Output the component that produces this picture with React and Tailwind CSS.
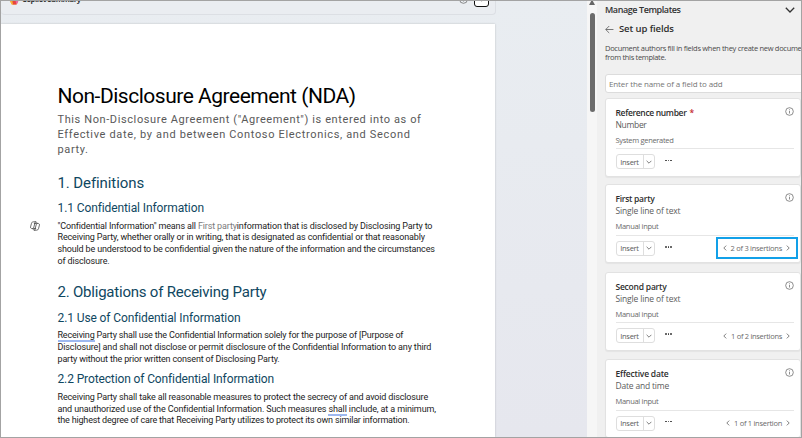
const APTOS = "font-[Roboto,'Liberation_Sans',sans-serif]";
const SEGOE = "font-['Open_Sans','Noto_Sans',sans-serif]";

function Line({ t, children }) {
  return <span className={`block whitespace-nowrap ${t}`}>{children}</span>;
}

function Title1({ className, children }) {
  return <h2 className={`text-[15px] leading-[18px] text-[#0f4761] whitespace-nowrap ${className}`}>{children}</h2>;
}

function Title2({ className, children }) {
  return <h3 className={`text-[12px] leading-[16px] text-[#0f4761] whitespace-nowrap ${className}`}>{children}</h3>;
}

function Body({ className, children }) {
  return <p className={`text-[9px] leading-[11.67px] text-[#1c1c1c] ${className}`}>{children}</p>;
}

function Grammar({ children }) {
  return <span className="border-b-2 border-[#9db8f0]">{children}</span>;
}

function CopilotOutline() {
  return (
    <svg viewBox="0 0 20 20" className="h-[10px] w-[10px] shrink-0" fill="none" stroke="#4a4a4a" strokeWidth="1.6" strokeLinejoin="round" strokeLinecap="round">
      <path d="M5.2 15H3.6C1.6 15 .7 13.4 1.1 11.8L3 4.6C3.5 2.6 4.8 1.6 6.8 1.6H11.8C13 1.6 13.6 2.6 13.9 4.8" />
      <path d="M14.8 5H16.4C18.4 5 19.3 6.6 18.9 8.2L17 15.4C16.5 17.4 15.2 18.4 13.2 18.4H8.2C7 18.4 6.4 17.4 6.1 15.2" />
      <path d="M10.6 1.6 6.9 15H11.4M9.4 18.4 13.1 5H8.6" />
    </svg>
  );
}

function Info({ className = "" }) {
  return (
    <svg viewBox="0 0 16 16" className={`h-[9px] w-[9px] shrink-0 ${className}`} fill="none" stroke="#666" strokeWidth="1.3">
      <circle cx="8" cy="8" r="6.8" />
      <path d="M8 7v4.6M8 4.2v1.6" />
    </svg>
  );
}

function Chevron({ d, className }) {
  return (
    <svg viewBox="0 0 10 10" className={`shrink-0 ${className}`} fill="none" stroke="currentColor" strokeWidth="1.3">
      <path d={d} />
    </svg>
  );
}

function Field({ name, nameT, required, type, typeT, source, sourceT, count, countT, highlight, className }) {
  return (
    <section className={`relative h-[79px] shrink-0 rounded-[3px] border border-[#e2e2e2] bg-white pl-[9.5px] pr-[6px] shadow-[0_1px_1px_rgba(0,0,0,0.05)] ${className}`}>
      <div className="flex items-start justify-between pt-[8px]">
        <div className="whitespace-nowrap text-[8.5px] leading-[12px]">
          <div className={`font-semibold text-[#2e2e2e] ${nameT}`}>
            {name}
            {required && <span className="ml-[3px] text-[#c4262e]">*</span>}
          </div>
          <div className={`text-[#5c5c5c] ${typeT}`}>{type}</div>
        </div>
        <Info />
      </div>
      <div className={`mt-[4px] text-[7.5px] leading-[10px] text-[#6a6a6a] ${sourceT}`}>{source}</div>
      <div className="mt-[3.5px] h-[1px] bg-[#e6e6e6]" />
      <div className="mt-[5px] flex h-[15px] items-center">
        <div className="flex h-[15px] items-center rounded-[3px] border border-[#dedede] text-[#5a5a5a]">
          <span className="w-[26px] text-center text-[7.5px] leading-[12px] tracking-[-0.28px]">Insert</span>
          <span className="flex h-full w-[11px] items-center justify-center border-l border-[#dedede]">
            <Chevron d="M1 3 5 7 9 3" className="h-[6px] w-[6px]" />
          </span>
        </div>
        <div className="mb-[3px] ml-[10.5px] flex gap-[1px]">
          <i className="h-[1.5px] w-[1.5px] rounded-full bg-[#3a3a3a]" />
          <i className="h-[1.5px] w-[1.5px] rounded-full bg-[#3a3a3a]" />
          <i className="h-[1.5px] w-[1.5px] rounded-full bg-[#3a3a3a]" />
        </div>
        {count && (
          <div className="ml-auto mr-[3px] flex items-center gap-[3px] text-[#5c5c5c]">
            <Chevron d="M7 1 3 5 7 9" className="h-[6px] w-[6px]" />
            <span className={`whitespace-nowrap text-[7.5px] leading-[12px] text-[#6a6a6a] ${countT}`}>{count}</span>
            <Chevron d="M3 1 7 5 3 9" className="h-[6px] w-[6px]" />
          </div>
        )}
      </div>
      {highlight && <div className="absolute right-[2px] top-[51.5px] h-[22px] w-[82px] border-2 border-[#12a0e8]" />}
    </section>
  );
}

export default function App() {
  return (
    <div className="flex h-[438px] w-[802px] overflow-hidden border border-[#a3a3a3] bg-[#f0f0f0]">
      <main className={`flex w-[586px] shrink-0 flex-col overflow-hidden bg-linear-to-b from-[#e9edf1] to-[#e6e7ee] ${APTOS}`}>
        <div className="flex h-[14px] w-[495px] shrink-0 items-start overflow-hidden rounded-b-[4px] border-b border-r border-[#dcdfe4] bg-[#eaedf1]">
          <svg viewBox="0 0 20 20" className="-mt-[7px] ml-[7px] h-[11px] w-[12px] shrink-0">
            <path d="M6 1h8l5 9-4 9H6L1 10z" fill="#f28a2e" />
            <path d="M1 10 5 12l4 7H6z" fill="#f6b73c" />
            <path d="M8 12h8l-2 7H8z" fill="#e8453c" />
            <path d="M15 5l4 5-4 9-2-5z" fill="#e765a8" />
          </svg>
          <span className={`-mt-[7px] ml-[2px] whitespace-nowrap text-[7.5px] font-bold leading-[11px] tracking-[-0.4px] text-[#333] ${SEGOE}`}>Copilot Summary</span>
          <Info className="-mt-[6px] ml-auto" />
          <div className="-mt-[8px] ml-[6px] mr-[6px] flex h-[14px] w-[15px] items-center justify-center rounded-[3px] border-[1.5px] border-[#111] bg-white">
            <Chevron d="M1 3 5 7 9 3" className="h-[6px] w-[6px] text-[#555]" />
          </div>
        </div>
        <article className="mt-[9px] w-[494px] flex-1 bg-white pl-[56.5px] pt-[60px] shadow-[0_0_2px_rgba(0,0,0,0.2)]">
          <h1 className="whitespace-nowrap text-[21px] leading-[24px] tracking-[-0.483px] text-black">Non-Disclosure Agreement (NDA)</h1>
          <p className="mt-[4px] text-[11px] leading-[15px] text-[#595959]">
            <Line t="tracking-[0.604px]">This Non-Disclosure Agreement ("Agreement") is entered into as of</Line>
            <Line t="tracking-[0.662px]">Effective date, by and between Contoso Electronics, and Second</Line>
            <Line t="tracking-[0.62px]">party.</Line>
          </p>
          <Title1 className="mt-[17px] tracking-[-0.092px]">1. Definitions</Title1>
          <Title2 className="mt-[8px] tracking-[-0.104px]">1.1 Confidential Information</Title2>
          <div className="-ml-[28px] mt-[4.8px] flex gap-[18px]">
            <CopilotOutline />
            <Body>
              <Line t="tracking-[-0.144px]">
                "Confidential Information" means all <span className="text-[#7b7b7b]">First party</span>information that is disclosed by Disclosing Party to
              </Line>
              <Line t="tracking-[-0.142px]">Receiving Party, whether orally or in writing, that is designated as confidential or that reasonably</Line>
              <Line t="tracking-[-0.154px]">should be understood to be confidential given the nature of the information and the circumstances</Line>
              <Line t="tracking-[-0.154px]">of disclosure.</Line>
            </Body>
          </div>
          <Title1 className="mt-[15.7px] tracking-[-0.214px]">2. Obligations of Receiving Party</Title1>
          <Title2 className="mt-[8.8px] tracking-[-0.107px]">2.1 Use of Confidential Information</Title2>
          <Body className="mt-[4.3px]">
            <Line t="tracking-[-0.172px]">
              <Grammar>Receiving</Grammar> Party shall use the Confidential Information solely for the purpose of [Purpose of
            </Line>
            <Line t="tracking-[-0.138px]">Disclosure] and shall not disclose or permit disclosure of the Confidential Information to any third</Line>
            <Line t="tracking-[-0.165px]">party without the prior written consent of Disclosing Party.</Line>
          </Body>
          <Title2 className="mt-[6.2px] tracking-[-0.122px]">2.2 Protection of Confidential Information</Title2>
          <Body className="mt-[4.5px]">
            <Line t="tracking-[-0.159px]">Receiving Party shall take all reasonable measures to protect the secrecy of and avoid disclosure</Line>
            <Line t="tracking-[-0.127px]">
              and unauthorized use of the Confidential Information. Such measures <Grammar>shall</Grammar> include, at a minimum,
            </Line>
            <Line t="tracking-[-0.178px]">the highest degree of care that Receiving Party utilizes to protect its own similar information.</Line>
          </Body>
        </article>
      </main>

      <div className="flex w-[10px] shrink-0 flex-col items-center bg-[#f6f6f6]">
        <svg viewBox="0 0 6 4" className="h-[4px] w-[6px]">
          <path d="M0 4 2.2 0h1.6L6 4z" fill="#666" />
        </svg>
        <div className="mt-[8px] h-[99px] w-[5px] rounded-full bg-[#6b6b6b]" />
      </div>

      <aside className={`flex min-w-0 flex-1 flex-col overflow-hidden pl-[8px] ${SEGOE}`}>
        <header className="flex h-[18px] shrink-0 items-center justify-between pr-[6px] text-[#333]">
          <h2 className="whitespace-nowrap text-[9px] font-semibold leading-[14px] tracking-[-0.424px]">Manage Templates</h2>
          <Chevron d="M0.8 2.8 5 7 9.2 2.8" className="h-[10px] w-[10px]" />
        </header>
        <div className="flex h-[20px] shrink-0 items-center gap-[5px] text-[#2e2e2e]">
          <svg viewBox="0 0 16 16" className="h-[9px] w-[9px]" fill="none" stroke="#555" strokeWidth="1.4">
            <path d="M15 8H1.5M7.5 1.8 1.3 8l6.2 6.2" />
          </svg>
          <h3 className="text-[9.5px] font-semibold leading-[14px] tracking-[-0.1px]">Set up fields</h3>
        </div>
        <p className="mt-[4.5px] shrink-0 text-[7.5px] leading-[9.7px] text-[#4a4a4a]">
          <Line t="tracking-[-0.299px]">Document authors fill in fields when they create new documents</Line>
          <Line t="tracking-[-0.316px]">from this template.</Line>
        </p>
        <div className="mt-[11px] flex h-[19px] w-[210px] shrink-0 items-center rounded-[3px] border border-[#dcdcdc] bg-white pl-[3px] pt-[1px] text-[8px] leading-[12px] tracking-[-0.14px] text-[#767676]">
          Enter the name of a field to add
        </div>
        <Field
          className="mt-[5px]"
          name="Reference number" nameT="tracking-[-0.335px]" required
          type="Number" typeT="tracking-[-0.322px]"
          source="System generated" sourceT="tracking-[-0.314px]"
        />
        <Field
          className="mt-[7.5px]"
          name="First party" nameT="tracking-[-0.28px]"
          type="Single line of text" typeT="tracking-[-0.143px]"
          source="Manual input" sourceT="tracking-[-0.29px]"
          count="2 of 3 insertions" countT="tracking-[-0.27px]" highlight
        />
        <Field
          className="mt-[8.3px]"
          name="Second party" nameT="tracking-[-0.223px]"
          type="Single line of text" typeT="tracking-[-0.143px]"
          source="Manual input" sourceT="tracking-[-0.29px]"
          count="1 of 2 insertions" countT="tracking-[-0.3px]"
        />
        <Field
          className="mt-[8.3px]"
          name="Effective date" nameT="tracking-[-0.205px]"
          type="Date and time" typeT="tracking-[-0.197px]"
          source="Manual input" sourceT="tracking-[-0.29px]"
          count="1 of 1 insertion" countT="tracking-[-0.28px]"
        />
      </aside>
    </div>
  );
}
